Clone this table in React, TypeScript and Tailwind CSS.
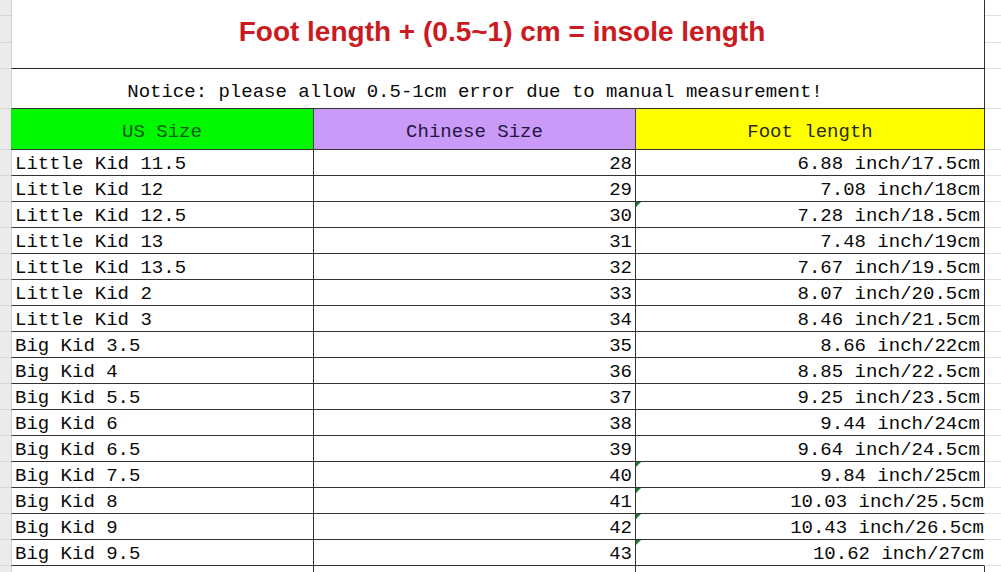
import React from "react";

/* ---------------- DATA ---------------- */
type SizeRow = { us: string; cn: string; foot: string; flag?: boolean; wide?: boolean };

const rows: SizeRow[] = [
  { us: "Little Kid 11.5", cn: "28", foot: "6.88 inch/17.5cm" },
  { us: "Little Kid 12", cn: "29", foot: "7.08 inch/18cm" },
  { us: "Little Kid 12.5", cn: "30", foot: "7.28 inch/18.5cm", flag: true },
  { us: "Little Kid 13", cn: "31", foot: "7.48 inch/19cm" },
  { us: "Little Kid 13.5", cn: "32", foot: "7.67 inch/19.5cm" },
  { us: "Little Kid 2", cn: "33", foot: "8.07 inch/20.5cm" },
  { us: "Little Kid 3", cn: "34", foot: "8.46 inch/21.5cm" },
  { us: "Big Kid 3.5", cn: "35", foot: "8.66 inch/22cm" },
  { us: "Big Kid 4", cn: "36", foot: "8.85 inch/22.5cm" },
  { us: "Big Kid 5.5", cn: "37", foot: "9.25 inch/23.5cm" },
  { us: "Big Kid 6", cn: "38", foot: "9.44 inch/24cm" },
  { us: "Big Kid 6.5", cn: "39", foot: "9.64 inch/24.5cm" },
  { us: "Big Kid 7.5", cn: "40", foot: "9.84 inch/25cm", flag: true },
  { us: "Big Kid 8", cn: "41", foot: "10.03 inch/25.5cm", flag: true, wide: true },
  { us: "Big Kid 9", cn: "42", foot: "10.43 inch/26.5cm", flag: true, wide: true },
  { us: "Big Kid 9.5", cn: "43", foot: "10.62 inch/27cm", flag: true, wide: true },
];

const mono = "font-['Liberation_Mono','DejaVu_Sans_Mono',monospace]";

/* ---------------- GUTTERS ---------------- */
function LeftGutter({ h }: { h: string }) {
  return <div className={`w-[11px] shrink-0 bg-[#ebebeb] border-b border-[#d4d4d4] ${h}`} />;
}

function RightGutter({ h }: { h: string }) {
  return <div className={`flex-1 bg-white border-b border-[#e0e0e0] ${h}`} />;
}

/* ---------------- MAIN ---------------- */
export default function App() {
  return (
    <div className={`w-[1001px] h-[572px] bg-white overflow-hidden flex flex-col ${mono} text-[19px] text-[#0a0a0a]`}>
      {/* title block */}
      <div className="flex h-[69px]">
        <div className="w-[11px] shrink-0 flex flex-col">
          <div className="h-[16px] bg-[#ebebeb] border-b border-[#d4d4d4]" />
          <div className="h-[27px] bg-[#ebebeb] border-b border-[#d4d4d4]" />
          <div className="h-[26px] bg-[#ebebeb] border-b border-[#d4d4d4]" />
        </div>
        <div className="w-[974px] shrink-0 border-l border-[#cfcfcf] border-r border-r-[#333] border-b border-b-[#222] flex items-center justify-center pb-[4px] pl-[8px]">
          <span className="font-['Liberation_Sans',Arial,sans-serif] font-bold text-[28px] tracking-[0px] text-[#cc1a22]">
            Foot length + (0.5~1) cm = insole length
          </span>
        </div>
        <div className="flex-1 flex flex-col">
          <div className="h-[16px] border-b border-[#e0e0e0]" />
          <div className="h-[27px] border-b border-[#e0e0e0]" />
          <div className="h-[26px] border-b border-[#e0e0e0]" />
        </div>
      </div>

      {/* notice */}
      <div className="flex h-[40px]">
        <LeftGutter h="h-[40px]" />
        <div className="w-[974px] shrink-0 border-l border-[#cfcfcf] border-r border-r-[#333] border-b border-b-[#333] flex items-center justify-center pt-[8px] pr-[46px]">
          Notice: please allow 0.5-1cm error due to manual measurement!
        </div>
        <RightGutter h="h-[40px]" />
      </div>

      {/* header */}
      <div className="flex h-[41px]">
        <LeftGutter h="h-[41px]" />
        <div className="w-[302px] shrink-0 bg-[#00f800] border-b border-[#333] flex items-center justify-center pt-[6px] text-[#0d5c17]">
          US Size
        </div>
        <div className="w-[322px] shrink-0 bg-[#c99af8] border-l border-[#444] border-b border-b-[#333] flex items-center justify-center pt-[6px] text-[#26163f]">
          Chinese Size
        </div>
        <div className="w-[350px] shrink-0 bg-[#ffff00] border-l border-[#444] border-r border-r-[#333] border-b border-b-[#333] flex items-center justify-center pt-[6px] text-[#2a2a12]">
          Foot length
        </div>
        <RightGutter h="h-[41px]" />
      </div>

      {/* data rows */}
      {rows.map((r) => (
        <div key={r.cn} className="flex h-[26px]">
          <LeftGutter h="h-[26px]" />
          <div className="w-[302px] shrink-0 border-l border-[#cfcfcf] border-b border-b-[#333] flex items-center pl-[3px] pt-[3px] whitespace-nowrap">
            {r.us}
          </div>
          <div className="w-[322px] shrink-0 border-l border-[#333] border-b border-b-[#333] flex items-center justify-end pr-[3px] pt-[3px]">
            {r.cn}
          </div>
          <div
            className={`relative w-[350px] shrink-0 border-l border-[#333] border-b border-b-[#333] flex items-center justify-end pt-[3px] whitespace-nowrap ${
              r.wide ? "pr-0 border-r border-r-transparent" : "pr-[4px] border-r border-r-[#333]"
            }`}
          >
            {r.flag && (
              <span className="absolute left-0 top-0 w-0 h-0 border-t-[5px] border-t-[#1d7a3c] border-r-[5px] border-r-transparent" />
            )}
            {r.foot}
          </div>
          <RightGutter h="h-[26px]" />
        </div>
      ))}

      {/* trailing partial row */}
      <div className="flex flex-1">
        <div className="w-[11px] shrink-0 bg-[#ebebeb]" />
        <div className="w-[302px] shrink-0 border-l border-[#cfcfcf]" />
        <div className="w-[322px] shrink-0 border-l border-[#333]" />
        <div className="w-[350px] shrink-0 border-l border-[#333] border-r border-r-[#333]" />
        <div className="flex-1" />
      </div>
    </div>
  );
}
